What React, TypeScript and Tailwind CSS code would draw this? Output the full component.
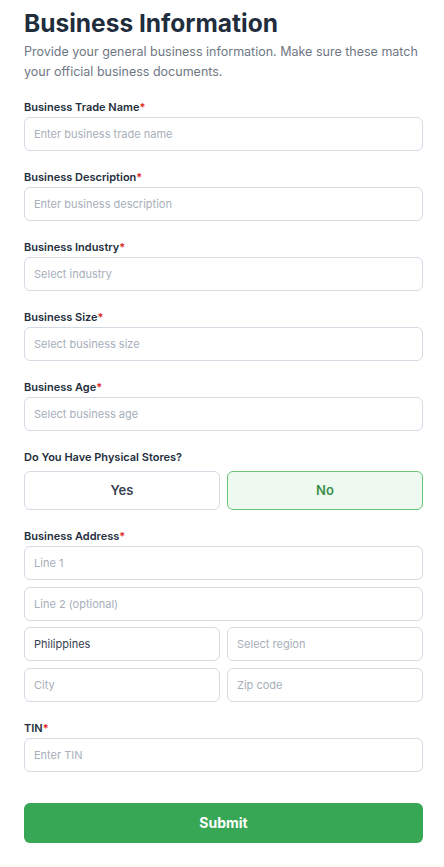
import React, { useState } from 'react';

const font = { fontFamily: 'Inter, "Noto Sans", sans-serif' };

const Label: React.FC<{ text: string; required?: boolean }> = ({ text, required }) => (
  <label className="block text-[11px] leading-4 font-semibold text-[#252f3d] mb-0.5">
    {text}
    {required && <span className="text-[#dc2626]">*</span>}
  </label>
);

const Field: React.FC<{ placeholder: string; value?: string }> = ({ placeholder, value }) => (
  <input
    defaultValue={value}
    placeholder={placeholder}
    className="w-full h-[34px] rounded-md border border-[#d5dbe3] bg-white px-[9px] text-[11px] text-[#374151] placeholder:text-[#a7afbb] outline-none"
  />
);

export default function App() {
  const [stores, setStores] = useState<'yes' | 'no'>('no');

  return (
    <div className="min-h-screen bg-[#fffcf2]" style={font}>
      <div className="h-[865px] bg-white pl-6 pr-[21px] pt-[7px]">
        {/* Header */}
        <h1 className="text-[24.5px] leading-8 font-bold text-[#1f2d3d]">Business Information</h1>
        <p className="mt-[3px] text-[12.5px] leading-5 text-[#707784]">
          Provide your general business information. Make sure these match your official business documents.
        </p>

        <div className="mt-[17px] flex flex-col gap-[18px]">
          <div>
            <Label text="Business Trade Name" required />
            <Field placeholder="Enter business trade name" />
          </div>
          <div>
            <Label text="Business Description" required />
            <Field placeholder="Enter business description" />
          </div>
          <div>
            <Label text="Business Industry" required />
            <Field placeholder="Select industry" />
          </div>
          <div>
            <Label text="Business Size" required />
            <Field placeholder="Select business size" />
          </div>
          <div>
            <Label text="Business Age" required />
            <Field placeholder="Select business age" />
          </div>

          {/* Physical stores */}
          <div>
            <label className="block text-[11px] leading-4 font-semibold text-[#252f3d] mb-1.5">
              Do You Have Physical Stores?
            </label>
            <div className="grid grid-cols-2 gap-[7px]">
              <button
                onClick={() => setStores('yes')}
                className={
                  stores === 'yes'
                    ? 'h-[39px] rounded-md border border-[#6cc479] bg-[#eefaf0] text-[13px] font-semibold text-[#3d8f4b]'
                    : 'h-[39px] rounded-md border border-[#d5dbe3] bg-white text-[13px] font-semibold text-[#374151]'
                }
              >
                Yes
              </button>
              <button
                onClick={() => setStores('no')}
                className={
                  stores === 'no'
                    ? 'h-[39px] rounded-md border border-[#6cc479] bg-[#eefaf0] text-[13px] font-semibold text-[#3d8f4b]'
                    : 'h-[39px] rounded-md border border-[#d5dbe3] bg-white text-[13px] font-semibold text-[#374151]'
                }
              >
                No
              </button>
            </div>
          </div>

          {/* Address */}
          <div>
            <Label text="Business Address" required />
            <div className="flex flex-col gap-[6.5px]">
              <Field placeholder="Line 1" />
              <Field placeholder="Line 2 (optional)" />
              <div className="grid grid-cols-2 gap-x-[7px] gap-y-[6.5px]">
                <Field placeholder="Country" value="Philippines" />
                <Field placeholder="Select region" />
                <Field placeholder="City" />
                <Field placeholder="Zip code" />
              </div>
            </div>
          </div>

          <div>
            <Label text="TIN" required />
            <Field placeholder="Enter TIN" />
          </div>
        </div>

        <button className="mt-[31px] w-full h-10 rounded-md bg-[#38a755] text-sm font-bold text-white">
          Submit
        </button>
      </div>
    </div>
  );
}
